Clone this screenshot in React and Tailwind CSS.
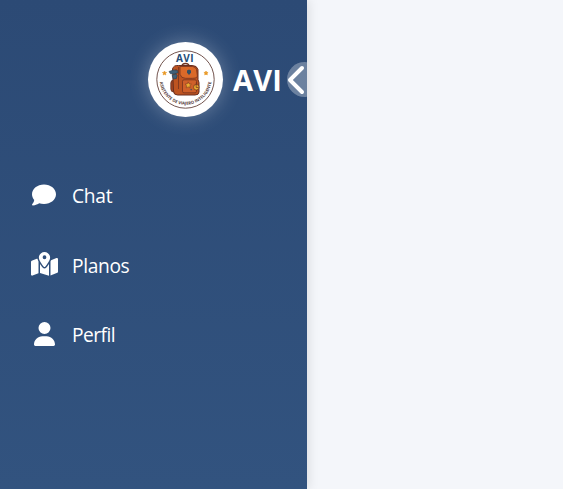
import { FaComment, FaMapLocationDot, FaUser, FaChevronLeft } from 'react-icons/fa6';

const items = [
  { label: 'Chat', Icon: FaComment, size: 'h-6 w-6', text: 'tracking-[-0.25px]' },
  { label: 'Planos', Icon: FaMapLocationDot, size: 'h-6 w-[27px]', text: 'tracking-[-0.35px]' },
  { label: 'Perfil', Icon: FaUser, size: 'h-6 w-[21px]', text: 'tracking-[-0.55px]' },
];

function Logo() {
  return (
    <svg viewBox="0 0 75 75" className="h-[75px] w-[75px] shrink-0 rounded-full bg-white shadow-[0_0_20px_rgba(255,255,255,0.3)]">
      <circle cx="37.5" cy="37.5" r="28.7" fill="none" stroke="#63413a" strokeWidth="0.9" />
      <text x="37" y="20" textAnchor="middle" fontFamily="Open Sans, sans-serif" fontWeight="700" fontSize="10" letterSpacing=".4" fill="#264d78">AVI</text>
      <defs>
        <path id="ring" d="M11.5 36.8 A26 26 0 0 0 63.5 36.8" />
      </defs>
      <text fontFamily="Open Sans, sans-serif" fontWeight="700" fontSize="4.2" fill="#563b39" textAnchor="middle">
        <textPath href="#ring" startOffset="50%">ASISTENTE DE VIAJERO INTELIGENTE</textPath>
      </text>
      <path d="M16.5 29 l.65 1.3 1.45.2-1.05 1 .25 1.45-1.3-.7-1.3.7.25-1.45-1.05-1 1.45-.2z" fill="#e99a28" stroke="#e99a28" strokeWidth=".6" />
      <path d="M58 29 l.65 1.3 1.45.2-1.05 1 .25 1.45-1.3-.7-1.3.7.25-1.45-1.05-1 1.45-.2z" fill="#e99a28" stroke="#e99a28" strokeWidth=".6" />
      <path d="M34 24.5 q0-3 3.5-3 q3.5 0 3.5 3" fill="none" stroke="#703521" strokeWidth="1.4" />
      <rect x="22.8" y="38" width="6.5" height="12" rx="3" fill="#a34420" stroke="#642f20" strokeWidth=".8" />
      <path d="M24.5 27 q1-4 6-3.5 h13.5 q5 0 6 4 v10 l1 3 v9.5 q0 3-4 3 H29.5 q-4 0-4-4z" fill="#bd5320" stroke="#682f20" strokeWidth="1" />
      <path d="M32 24.5 h12.5 q3 0 4 3 l1 7 q-2 2.2-5 1.8 h-7 q-4.5 0-5.5-4z" fill="#da6929" stroke="#75341f" strokeWidth=".8" />
      <rect x="34.5" y="37.8" width="14" height="13" rx="1.5" fill="#cf602a" stroke="#75341f" strokeWidth=".8" />
      <path d="M30.5 25 v22 M28 27 v10" stroke="#75341f" strokeWidth=".8" />
      <path d="M39 28.4 l2-.9 2 .9 v2.3 l-2 2.4-2-2.4z" fill="#354f62" />
      <path d="M21 29.5 l4.5-1.6 4 .5 .5 2.4-4 1.2-3.5-.2z M24 33.5 l3.5-1.6 1.8 1.6-1 3-2.8.5z" fill="#3f6078" stroke="#294354" strokeWidth=".6" />
      <path d="M40.2 39.9 l1 2 2.2.3-1.6 1.5.4 2.2-2-1-2 1 .4-2.2-1.6-1.5 2.2-.3z" fill="#edae32" stroke="#713420" strokeWidth=".5" />
      <circle cx="48.3" cy="45.2" r="2.8" fill="#e9aa2f" stroke="#713420" strokeWidth=".7" />
      <path d="M48.2 40.5v5h2.5" fill="none" stroke="#713420" strokeWidth=".7" />
      <circle cx="43.2" cy="47.6" r=".8" fill="#405466" />
    </svg>
  );
}

export default function App() {
  return (
    <div className="flex h-screen overflow-hidden bg-[#f4f6fa] font-['Open_Sans',sans-serif] text-white">
      <aside className="w-[307px] shrink-0 bg-linear-to-b from-[#2c4a75] to-[#32537f] shadow-[2px_0_10px_rgba(0,0,0,0.1)]">
        <header className="flex h-[159px] items-center overflow-hidden pl-[148px]">
          <Logo />
          <h1 className="ml-[10px] w-[54px] shrink-0 text-[29px] leading-10 font-bold tracking-[0.2px]">AVI</h1>
          <button aria-label="Ocultar menú" className="flex h-[35px] w-[35px] shrink-0 items-center rounded-full bg-white/30 pl-px">
            <FaChevronLeft className="h-8 w-5 shrink-0" />
          </button>
        </header>
        <nav className="flex flex-col pt-px">
          {items.map(({ label, Icon, size, text }) => (
            <a key={label} className="flex h-[69.5px] items-center pl-[29px]">
              <span className="flex w-[30px] justify-center">
                <Icon className={size} />
              </span>
              <span className={`ml-[13px] pt-[3px] text-[19.2px] leading-7 ${text}`}>{label}</span>
            </a>
          ))}
        </nav>
      </aside>
      <main className="flex-1" />
    </div>
  );
}
